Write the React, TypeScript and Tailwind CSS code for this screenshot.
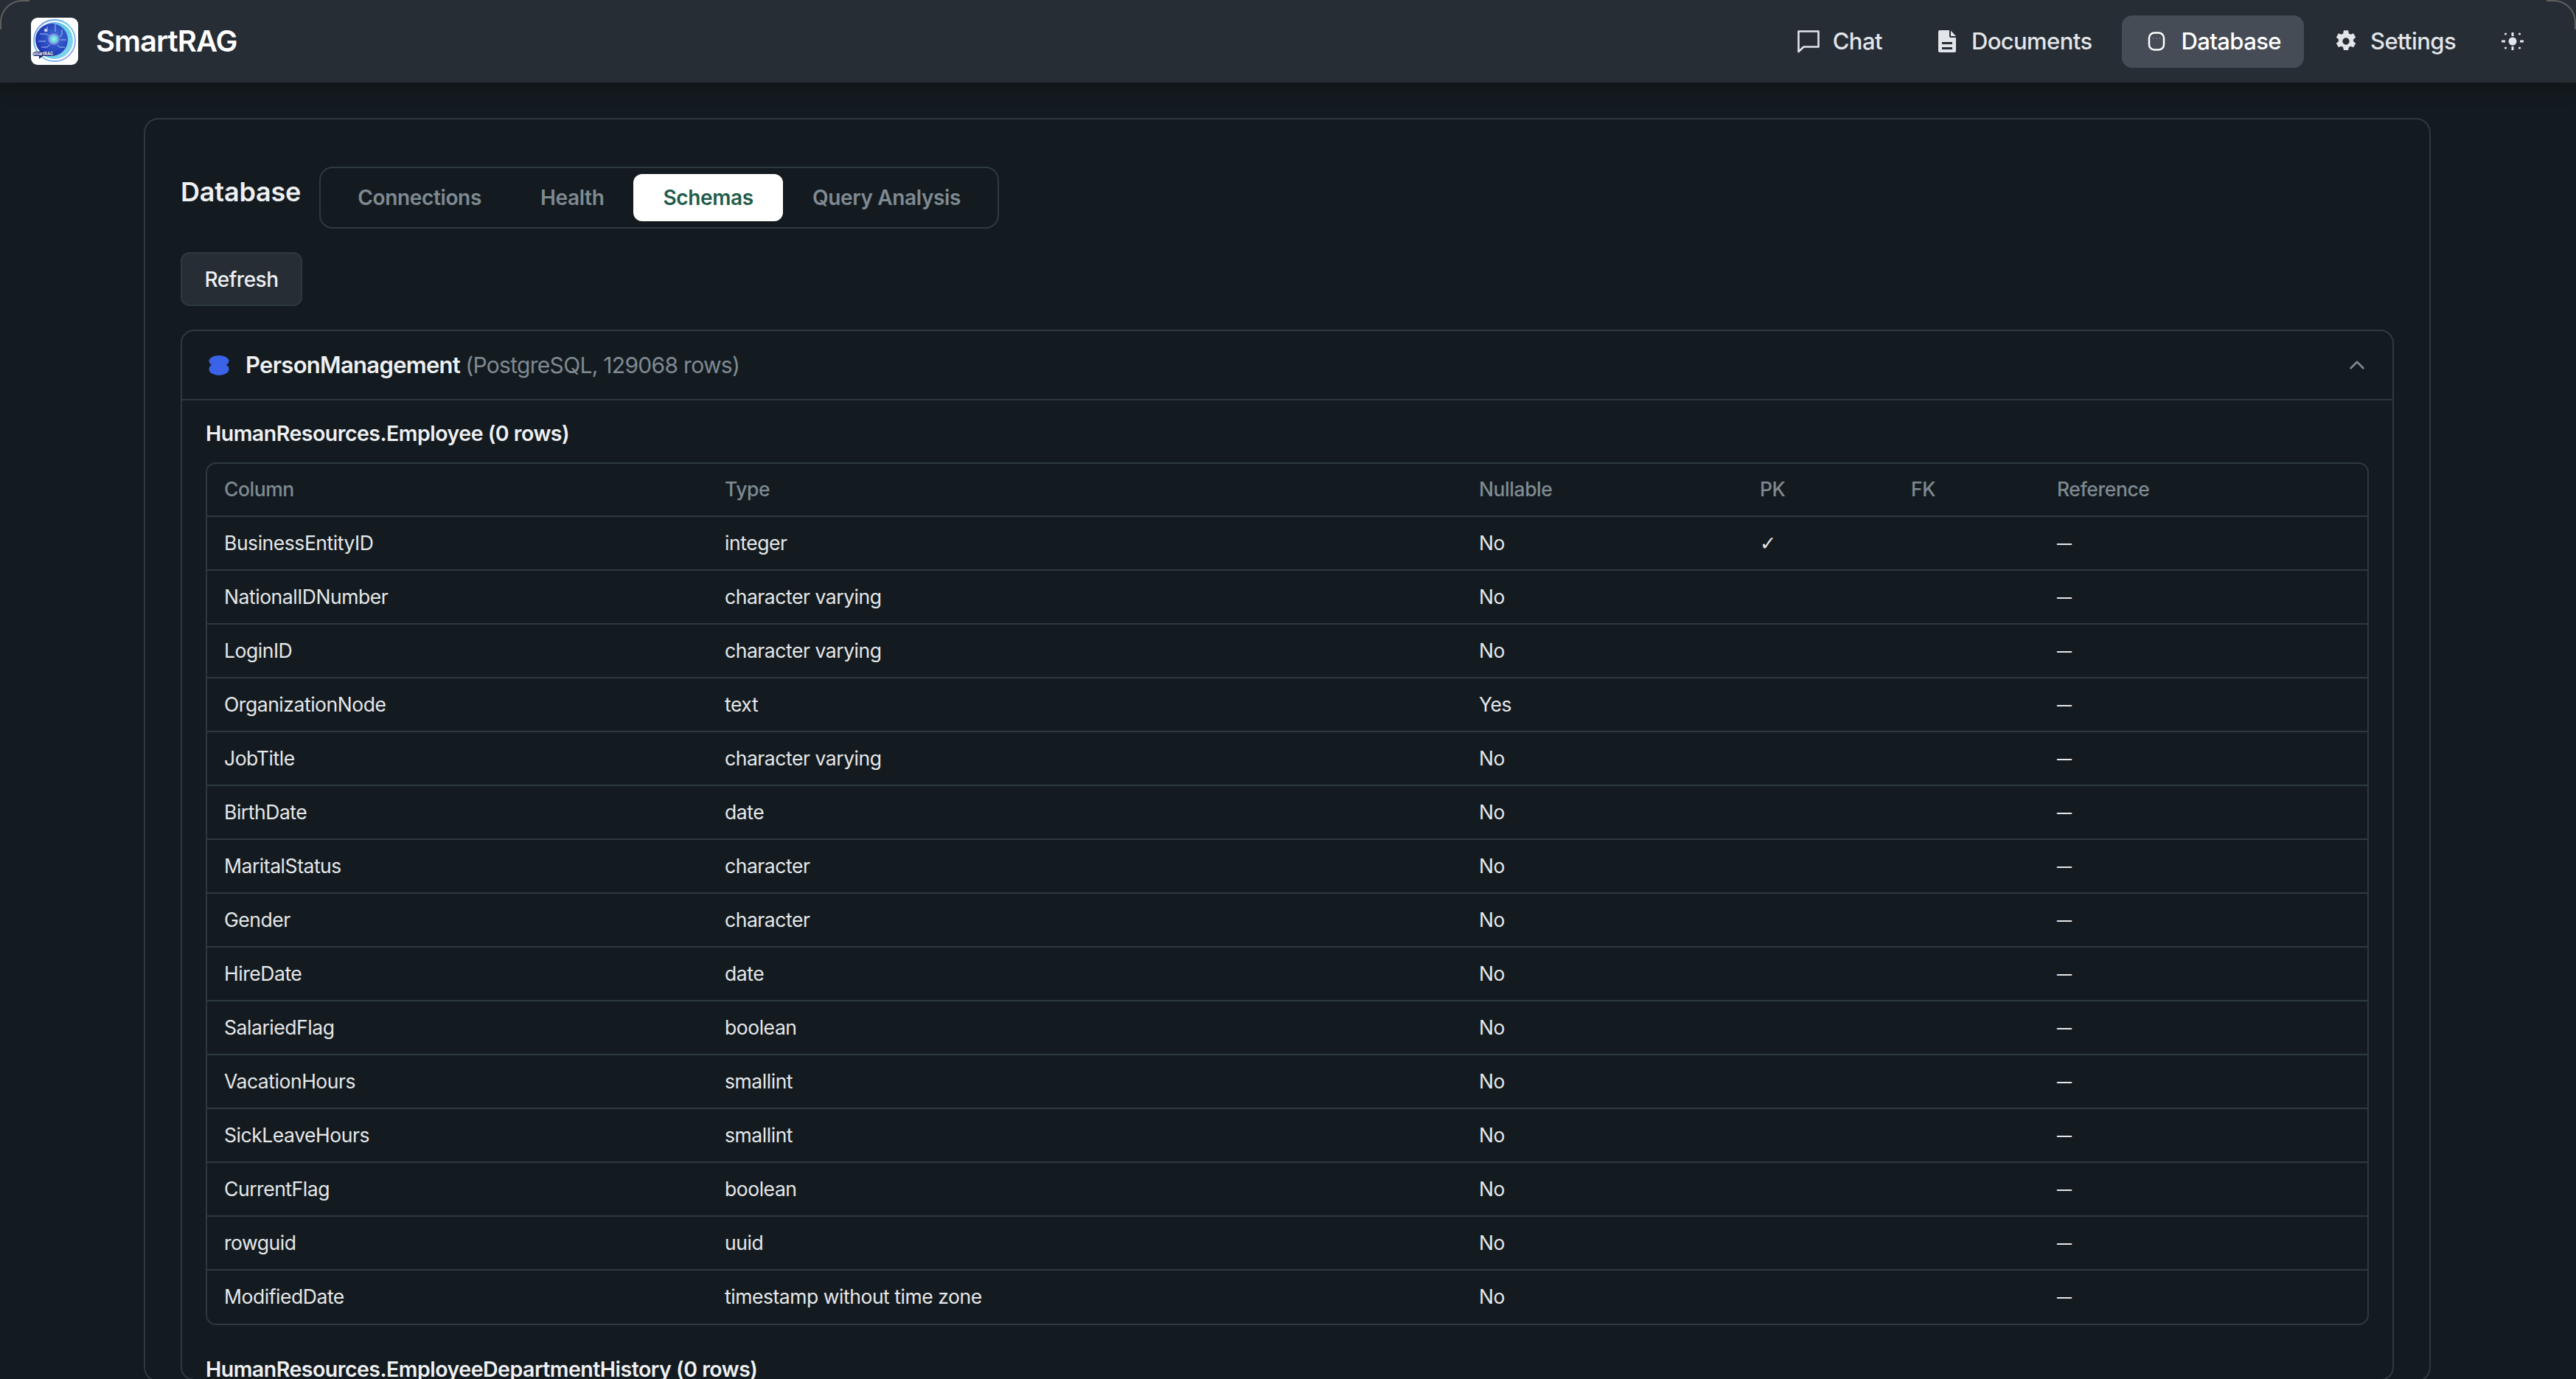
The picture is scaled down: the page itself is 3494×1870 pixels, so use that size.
import { ChevronUp } from 'lucide-react'

const font = 'font-["Inter","Noto_Sans",sans-serif]'

type Col = { name: string; type: string; nullable: string; pk?: boolean }

const columns: Col[] = [
  { name: 'BusinessEntityID', type: 'integer', nullable: 'No', pk: true },
  { name: 'NationalIDNumber', type: 'character varying', nullable: 'No' },
  { name: 'LoginID', type: 'character varying', nullable: 'No' },
  { name: 'OrganizationNode', type: 'text', nullable: 'Yes' },
  { name: 'JobTitle', type: 'character varying', nullable: 'No' },
  { name: 'BirthDate', type: 'date', nullable: 'No' },
  { name: 'MaritalStatus', type: 'character', nullable: 'No' },
  { name: 'Gender', type: 'character', nullable: 'No' },
  { name: 'HireDate', type: 'date', nullable: 'No' },
  { name: 'SalariedFlag', type: 'boolean', nullable: 'No' },
  { name: 'VacationHours', type: 'smallint', nullable: 'No' },
  { name: 'SickLeaveHours', type: 'smallint', nullable: 'No' },
  { name: 'CurrentFlag', type: 'boolean', nullable: 'No' },
  { name: 'rowguid', type: 'uuid', nullable: 'No' },
  { name: 'ModifiedDate', type: 'timestamp without time zone', nullable: 'No' },
]

function Logo() {
  return (
    <svg width="64" height="64" viewBox="0 0 64 64" className="shrink-0">
      <defs>
        <linearGradient id="ring" x1="0" y1="0" x2="1" y2="1">
          <stop offset="0" stopColor="#6f8ff0" />
          <stop offset="0.5" stopColor="#62cbe6" />
          <stop offset="1" stopColor="#a58cf0" />
        </linearGradient>
        <linearGradient id="outer" x1="0" y1="0" x2="1" y2="0.6">
          <stop offset="0" stopColor="#7f7ff0" />
          <stop offset="0.6" stopColor="#62cbe6" />
          <stop offset="1" stopColor="#7fd4ec" />
        </linearGradient>
        <radialGradient id="core" cx="0.62" cy="0.42" r="0.7">
          <stop offset="0" stopColor="#3d6fd6" />
          <stop offset="1" stopColor="#1b2fb0" />
        </radialGradient>
        <radialGradient id="glow" cx="0.5" cy="0.5" r="0.5">
          <stop offset="0" stopColor="#a8f0ee" />
          <stop offset="0.6" stopColor="#5fd0e0" />
          <stop offset="1" stopColor="#8a5fd8" />
        </radialGradient>
      </defs>
      <rect width="64" height="64" rx="9" fill="#ffffff" />
      <circle cx="32" cy="31" r="28" fill="none" stroke="url(#ring)" strokeWidth="1.800" />
      <circle cx="32" cy="31" r="25" fill="url(#outer)" />
      <circle cx="28" cy="30" r="22" fill="url(#core)" />
      <circle cx="31" cy="29" r="8" fill="url(#glow)" />
      <path d="M12 22h9l4 3M10 32h10M14 40h8l4-4M42 16v7l-3 3M48 30h-8M46 40h-7l-3-3M22 12v7M33 9v10" stroke="#b4cdf4" strokeWidth="0.900" fill="none" />
      <circle cx="20" cy="17" r="2" fill="#d8e4fa" />
      <path d="M5 46h23a3 3 0 0 1 0 6H16l-5 4v-4H5a3 3 0 0 1 0-6z" fill="#141f6e" />
      <text x="16" y="51.300" fontSize="5.600" fontWeight="700" fill="#ffffff" textAnchor="middle" fontFamily="Inter, sans-serif">SmartRAG</text>
    </svg>
  )
}

function ChatIcon() {
  return (
    <svg width="32" height="32" viewBox="0 0 32 32" fill="none" stroke="currentColor" strokeWidth="2.600" strokeLinejoin="round">
      <path d="M2.500 2.500h27v21H9.500L2.500 30z" />
    </svg>
  )
}

function DocIcon() {
  return (
    <svg width="32" height="32" viewBox="0 0 32 32" fill="currentColor">
      <path fillRule="evenodd" d="M6 1h13v8a2 2 0 0 0 2 2h7v18a2 2 0 0 1-2 2H6a2 2 0 0 1-2-2V3a2 2 0 0 1 2-2zM9 17v3h14v-3zM9 24v3h14v-3z" />
      <path d="M21 1.500 28 9h-7z" />
    </svg>
  )
}

function DbIcon() {
  return (
    <svg width="32" height="32" viewBox="0 0 32 32" fill="none" stroke="currentColor" strokeWidth="2.500">
      <rect x="6" y="4.500" width="20" height="23" rx="7" />
      <circle cx="11.500" cy="12" r="0.800" fill="currentColor" stroke="none" opacity="0.4" />
      <circle cx="16" cy="12" r="0.800" fill="currentColor" stroke="none" opacity="0.4" />
      <circle cx="20.500" cy="12" r="0.800" fill="currentColor" stroke="none" opacity="0.4" />
    </svg>
  )
}

function GearIcon() {
  return (
    <svg width="32" height="32" viewBox="0 0 24 24" fill="currentColor">
      <path fillRule="evenodd" d="M9.700 1h4.600l.6 3.100c.6.2 1.200.5 1.700.9l3-1 2.300 4-2.400 2.100a7 7 0 0 1 0 1.900l2.400 2.100-2.300 4-3-1c-.5.4-1.100.7-1.700.9l-.6 3h-4.600l-.6-3a8 8 0 0 1-1.700-1l-3 1-2.300-4 2.400-2a7 7 0 0 1 0-2L2.100 8l2.300-4 3 1c.5-.4 1.100-.7 1.700-.9zM12 8.500a3.500 3.500 0 1 0 0 7 3.500 3.500 0 0 0 0-7z" />
    </svg>
  )
}

function SunIcon() {
  return (
    <svg width="32" height="32" viewBox="0 0 32 32" fill="currentColor">
      <circle cx="16" cy="16" r="5.500" />
      <rect x="14.500" y="4" width="3" height="5" />
      <rect x="14.500" y="23" width="3" height="5" />
      <rect x="1" y="14.500" width="5" height="3" />
      <rect x="26" y="14.500" width="5" height="3" />
      <circle cx="6.500" cy="6" r="1.600" />
      <circle cx="25.500" cy="6" r="1.600" />
      <circle cx="6.500" cy="25" r="1.600" />
      <circle cx="25.500" cy="25" r="1.600" />
    </svg>
  )
}

function NavItem({ icon, label, active }: { icon: React.ReactNode; label: string; active?: boolean }) {
  return (
    <div className={`flex items-center gap-[17px] h-[71px] px-[31px] rounded-[14px] text-[31px] font-medium tracking-[-0.6px] ${active ? 'bg-[#454c55] text-white' : 'text-[#e2e5e9]'}`}>
      <span className="flex items-center justify-center shrink-0 w-[32px]">{icon}</span>
      {label}
    </div>
  )
}

function Tab({ label, active }: { label: string; active?: boolean }) {
  return (
    <div className={`flex items-center h-[64px] px-[40px] rounded-[12px] text-[28px] font-semibold tracking-[-0.35px] ${active ? 'bg-white text-[#1f5c4b]' : 'text-[#7f8a92]'}`}>
      {label}
    </div>
  )
}

function SchemaTable() {
  return (
    <div className="border-2 border-[#2d3940] rounded-[14px]">
      <table className="w-full table-fixed border-collapse text-[26.500px] tracking-[-0.45px]">
        <colgroup>
          <col className="w-[679px]" />
          <col className="w-[1023px]" />
          <col className="w-[381px]" />
          <col className="w-[205px]" />
          <col className="w-[198px]" />
          <col />
        </colgroup>
        <thead>
          <tr className="h-[71px] text-left text-[#7f8a92]">
            <th className="pl-[23px] font-medium">Column</th>
            <th className="pl-[23px] font-medium">Type</th>
            <th className="pl-[23px] font-medium">Nullable</th>
            <th className="pl-[23px] font-medium">PK</th>
            <th className="pl-[23px] font-medium">FK</th>
            <th className="pl-[23px] font-medium">Reference</th>
          </tr>
        </thead>
        <tbody>
          {columns.map((c) => (
            <tr key={c.name} className="h-[73px] border-t-2 border-[#2d3940] text-[#e6e8ea]">
              <td className="pl-[23px]">{c.name}</td>
              <td className="pl-[23px]">{c.type}</td>
              <td className="pl-[23px]">{c.nullable}</td>
              <td className="pl-[23px] font-['DejaVu_Sans',sans-serif]">{c.pk ? '✓' : ''}</td>
              <td className="pl-[23px]"></td>
              <td className="pl-[23px] text-[20px] font-semibold">—</td>
            </tr>
          ))}
        </tbody>
      </table>
    </div>
  )
}

export default function App() {
  return (
    <div className={`${font} relative w-[3494px] h-[1870px] overflow-hidden bg-[#141b20] text-white flex flex-col`}>
      <header className="relative z-10 flex items-center justify-between h-[112px] shrink-0 pl-[42px] pr-[40px] bg-[#262d34] shadow-[0_4px_24px_rgba(0,0,0,0.35)]">
        <div className="flex items-center gap-[24px]">
          <Logo />
          <span className="text-[40px] font-semibold tracking-[-1px]">SmartRAG</span>
        </div>
        <nav className="flex items-center gap-[10px]">
          <NavItem icon={<ChatIcon />} label="Chat" />
          <NavItem icon={<DocIcon />} label="Documents" />
          <NavItem icon={<DbIcon />} label="Database" active />
          <NavItem icon={<GearIcon />} label="Settings" />
          <span className="flex items-center justify-center w-[32px] h-[32px] ml-[20px] mr-[30px] text-[#e2e5e9]"><SunIcon /></span>
        </nav>
      </header>

      <main className="flex-1 pt-[48px] pl-[195px] pr-[197px]">
        <section className="border-2 border-[#2d3940] rounded-[20px] pt-[64px] px-[48px]">
          <div className="flex items-start gap-[25px]">
            <h1 className="text-[36px] font-semibold leading-[68px] tracking-[-0.2px] text-[#eef0f2]">Database</h1>
            <div className="flex items-center h-[84px] px-[10px] border-2 border-[#2d3940] rounded-[18px]">
              <Tab label="Connections" />
              <Tab label="Health" />
              <Tab label="Schemas" active />
              <Tab label="Query Analysis" />
            </div>
          </div>

          <button className="block mt-[32px] w-[165px] h-[73px] bg-[#262d34] border-2 border-[#2d3940] rounded-[12px] text-[28px] font-medium tracking-[-0.5px] text-[#eef0f2]">Refresh</button>

          <div className="mt-[32px] border-2 border-[#2d3940] rounded-[18px]">
            <div className="flex items-center justify-between h-[94px] pl-[36px] pr-[31px] border-b-2 border-[#2d3940]">
              <div className="flex items-center gap-[22px]">
                <svg width="28" height="28" viewBox="0 0 28 28" fill="#3b63e8">
                  <ellipse cx="14" cy="8.500" rx="13.500" ry="7.500" />
                  <ellipse cx="14" cy="19.500" rx="13.500" ry="8.500" />
                </svg>
                <span className="text-[31px] font-semibold tracking-[-0.7px] text-[#eef0f2]">
                  PersonManagement{' '}
                  <span className="text-[30px] font-normal text-[#7f8a92]">(PostgreSQL, 129068 rows)</span>
                </span>
              </div>
              <ChevronUp size={34} strokeWidth={1.800} className="text-[#7f8a92]" />
            </div>
            <div className="px-[32px]">
              <h3 className="pt-[27px] pb-[21px] text-[28.500px] leading-[36px] font-semibold tracking-[-0.5px] text-[#eef0f2]">HumanResources.Employee (0 rows)</h3>
              <SchemaTable />
              <h3 className="pt-[47px] text-[28.500px] leading-[26px] font-semibold tracking-[-0.5px] text-[#eef0f2]">HumanResources.EmployeeDepartmentHistory (0 rows)</h3>
            </div>
          </div>
        </section>
      </main>

      <div className="absolute top-0 left-0 z-20 w-[40px] h-[40px] border-t-2 border-l-2 border-[#5e5e5c] rounded-tl-[30px]" />
      <div className="absolute top-0 right-0 z-20 w-[40px] h-[40px] border-t-2 border-r-2 border-[#5e5e5c] rounded-tr-[30px]" />
    </div>
  )
}
